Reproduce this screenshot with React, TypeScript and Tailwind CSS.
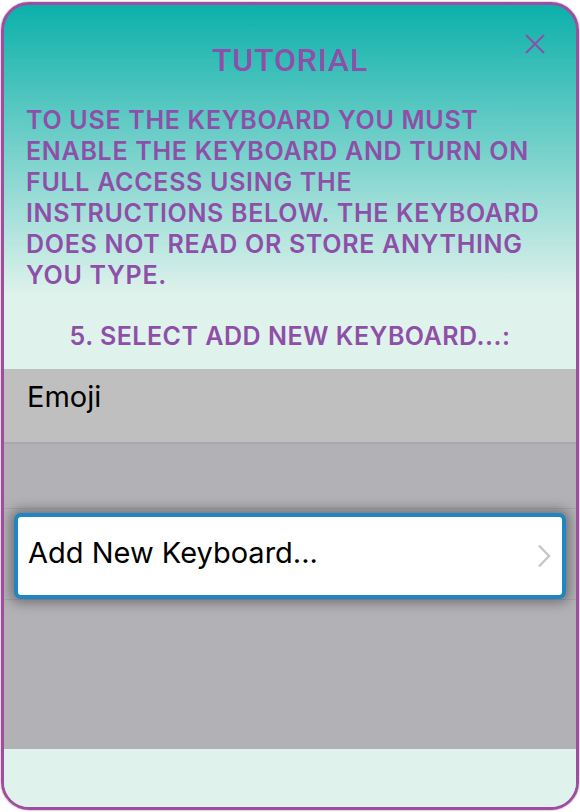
import React from "react";

export default function App() {
  return (
    <div className="w-[580px] h-[812px] bg-white relative">
      <div
        className="absolute left-[1px] top-[2px] w-[578px] h-[808px] rounded-[28px] border-[3px] border-[#a14ca1] overflow-hidden flex flex-col bg-[linear-gradient(to_bottom,#0cb0aa_0px,#e0f2ec_290px,#e0f2ec_100%)] shadow-[0_0_2px_rgba(0,0,0,0.5)]"
      >
        <div className="relative h-[100px] flex items-start justify-center pt-[36px]">
          <span className="text-[32px] leading-[38px] font-medium tracking-[0.8px] text-[#8e4fa8] font-['Roboto',sans-serif]">TUTORIAL</span>
          <svg className="absolute left-[520px] top-[28px]" width="22" height="22" viewBox="0 0 22 22">
            <path d="M2 2 L20 20 M20 2 L2 20" stroke="#8e4fa8" strokeWidth="2" fill="none" />
          </svg>
        </div>
        <div className="pl-[22px] pr-[10px] text-[25px] leading-[31px] font-semibold text-[#8e4fa8] font-['Inter',sans-serif] tracking-[0.7px] whitespace-nowrap">
          <div>TO USE THE KEYBOARD YOU MUST</div>
          <div>ENABLE THE KEYBOARD AND TURN ON</div>
          <div>FULL ACCESS USING THE</div>
          <div>INSTRUCTIONS BELOW. THE KEYBOARD</div>
          <div>DOES NOT READ OR STORE ANYTHING</div>
          <div>YOU TYPE.</div>
        </div>
        <div className="mt-[30px] h-[48px] text-center text-[25px] leading-[31px] font-semibold text-[#8e4fa8] font-['Inter',sans-serif] tracking-[0.5px] whitespace-nowrap">
          5. SELECT ADD NEW KEYBOARD...:
        </div>
        <div className="h-[380px] bg-[#b2b1b6] flex flex-col">
          <div className="h-[75px] bg-[#bfbfbf] border-b-2 border-[#a9a9ad] flex items-center pl-[23px] pb-[18px] text-[29px] text-black font-['Inter',sans-serif]">
            Emoji
          </div>
          <div className="h-[65px] border-b border-[#a6a6aa]" />
          <div className="h-[91px] border-b border-[#a6a6aa] relative">
            <div className="absolute left-[10px] top-[4px] w-[552px] h-[86px] bg-white rounded-[7px] border-[4px] border-[#1e86c4] shadow-[0_0_12px_4px_rgba(0,0,0,0.35)] flex items-center pl-[10px] pr-[11px]">
              <span className="flex-1 text-[29px] text-black font-['Inter',sans-serif] pb-[6px]">Add New Keyboard...</span>
              <svg width="14" height="24" viewBox="0 0 14 24">
                <path d="M2 1.5 L12 12 L2 22.5" stroke="#c7c7cc" strokeWidth="2.5" fill="none" />
              </svg>
            </div>
          </div>
        </div>
        <div className="flex-1 bg-[#e0f2ec]" />
      </div>
    </div>
  );
}
